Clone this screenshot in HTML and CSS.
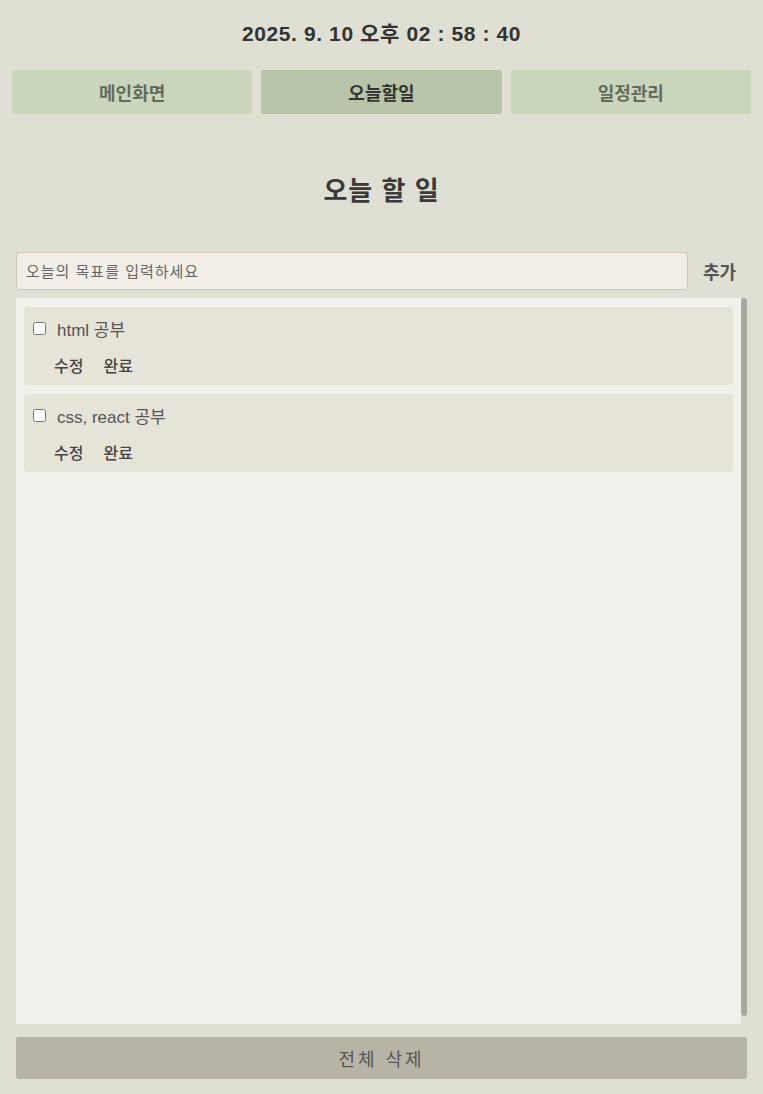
FILE: index.html
```html
<!DOCTYPE html>
<html lang="ko">
<head>
<meta charset="utf-8">
<title>오늘 할 일</title>
<link rel="stylesheet" href="styles.css">
</head>
<body>
<div class="page">
  <div class="clock">2025. 9. 10 오후 02 : 58 : 40</div>
  <nav class="tabs">
    <div class="tab">메인화면</div>
    <div class="tab active">오늘할일</div>
    <div class="tab">일정관리</div>
  </nav>
  <h1 class="title">오늘 할 일</h1>
  <div class="add-row">
    <input class="add-input" type="text" placeholder="오늘의 목표를 입력하세요">
    <button class="add-btn">추가</button>
  </div>
  <div class="list-wrap">
    <ul class="list">
      <li class="item">
        <label class="item-top"><input type="checkbox" class="check"><span class="item-text">html 공부</span></label>
        <div class="item-actions"><button class="act">수정</button><button class="act">완료</button></div>
      </li>
      <li class="item">
        <label class="item-top"><input type="checkbox" class="check"><span class="item-text">css, react 공부</span></label>
        <div class="item-actions"><button class="act">수정</button><button class="act">완료</button></div>
      </li>
    </ul>
    <div class="scrollbar"></div>
  </div>
  <button class="clear-btn">전체 삭제</button>
</div>
</body>
</html>
```
FILE: styles.css
```css
* { box-sizing: border-box; }
html, body { margin: 0; padding: 0; }
body {
  background: #e0dfd4;
  font-family: "Liberation Sans", "Noto Sans CJK KR", sans-serif;
  color: #333;
}
.page {
  width: 763px;
  height: 1094px;
  display: flex;
  flex-direction: column;
}
.clock {
  margin-top: 20px;
  height: 28px;
  text-align: center;
  font-size: 21px;
  font-weight: bold;
  letter-spacing: 0.6px;
  color: #333;
  line-height: 28px;
}
.tabs {
  margin: 22px 12px 0;
  display: flex;
  gap: 9px;
}
.tab {
  flex: 1;
  height: 44px;
  background: #c9d6bb;
  border-radius: 3px;
  display: flex;
  align-items: center;
  justify-content: center;
  font-size: 18px;
  font-weight: bold;
  color: #646b5d;
}
.tab.active {
  background: #b8c4a8;
  color: #333;
}
.title {
  margin: 60px 0 0;
  height: 34px;
  line-height: 34px;
  text-align: center;
  font-size: 26px;
  font-weight: bold;
  letter-spacing: 1px;
  color: #3a3a3a;
}
.add-row {
  margin: 44px 16px 0;
  display: flex;
  align-items: center;
}
.add-input {
  flex: 1;
  height: 38px;
  background: #f2eee7;
  border: 1px solid #cdc7b6;
  border-radius: 3px;
  padding: 0 9px;
  font-family: inherit;
  font-size: 15px;
  letter-spacing: 1px;
  color: #333;
}
.add-input::placeholder { color: #666; }
.add-btn {
  width: 59px;
  background: none;
  border: none;
  padding: 0 0 0 4px;
  font-family: inherit;
  font-size: 18px;
  font-weight: bold;
  color: #555;
}
.list-wrap {
  margin: 8px 16px 0;
  height: 726px;
  display: flex;
}
.list {
  flex: 1;
  margin: 0;
  padding: 9px 8px;
  list-style: none;
  background: #f1f0eb;
  display: flex;
  flex-direction: column;
  gap: 9px;
}
.scrollbar {
  width: 6px;
  margin-bottom: 8px;
  background: #a9a89f;
  border-radius: 3px;
}
.item {
  height: 78px;
  background: #e6e3d9;
  border-radius: 3px;
  padding: 10px 0 0 9px;
}
.item-top {
  display: flex;
  align-items: center;
  height: 22px;
}
.check {
  margin: 0 11px 0 0;
  width: 13px;
  height: 13px;
}
.item-text {
  font-size: 17px;
  color: #555;
}
.item-actions {
  margin-top: 14px;
  padding-left: 21px;
  display: flex;
  gap: 20px;
}
.act {
  background: none;
  border: none;
  padding: 0;
  font-family: inherit;
  font-size: 16px;
  font-weight: 500;
  color: #444;
}
.clear-btn {
  margin: 13px 16px 0;
  height: 42px;
  background: #b8b3a7;
  border: none;
  border-radius: 3px;
  font-family: inherit;
  font-size: 18px;
  letter-spacing: 3px;
  color: #555;
}
```
